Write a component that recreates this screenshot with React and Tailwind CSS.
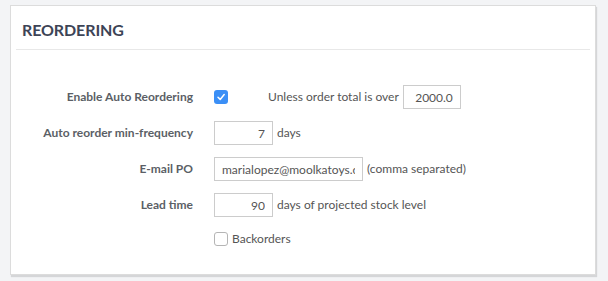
export default function App() {
  const font = { fontFamily: 'Lato, "Open Sans", sans-serif' };
  const label = "w-[177px] shrink-0 text-right text-[12px] font-bold text-[#5b5f66]";
  const input = "h-[24px] border border-[#cccccc] bg-white px-[7px] text-[12px] text-[#555] outline-none";
  return (
    <div className="w-[608px] h-[281px] bg-[#f3f4f6] pt-[5px] pl-[10px]" style={font}>
      <div className="w-[586px] h-[270px] bg-white border border-[#dcdcdc] shadow-[1px_2px_1px_rgba(0,0,0,0.12)] px-[5px]">
        <div className="border-b border-[#e8e8e8] h-[44px] px-[6px] pt-[14px]">
          <h2 className="text-[16px] font-bold text-[#3d4456] leading-[20px] tracking-[-0.1px]">REORDERING</h2>
        </div>
        <div className="flex flex-col pt-[35px] text-[12px] text-[#555]">
          <div className="flex items-center h-[24px]">
            <div className={label}>Enable Auto Reordering</div>
            <div className="ml-[21px] w-[14px] h-[14px] rounded-[3px] bg-[#3b8ff6] flex items-center justify-center">
              <svg width="10" height="10" viewBox="0 0 10 10">
                <path d="M2 5.2 L4.2 7.4 L8.2 2.6" fill="none" stroke="white" strokeWidth="1.5" strokeLinecap="round" strokeLinejoin="round" />
              </svg>
            </div>
            <span className="ml-[40px]">Unless order total is over</span>
            <input className={`${input} ml-[4px] w-[58px] text-right`} defaultValue="2000.0" />
          </div>
          <div className="flex items-center h-[24px] mt-[12px]">
            <div className={label}>Auto reorder min-frequency</div>
            <input className={`${input} ml-[21px] w-[59px] text-right`} defaultValue="7" />
            <span className="ml-[4px]">days</span>
          </div>
          <div className="flex items-center h-[24px] mt-[12px]">
            <div className={label}>E-mail PO</div>
            <input className={`${input} ml-[21px] w-[149px]`} defaultValue="marialopez@moolkatoys.com" />
            <span className="ml-[4px]">(comma separated)</span>
          </div>
          <div className="flex items-center h-[24px] mt-[12px]">
            <div className={label}>Lead time</div>
            <input className={`${input} ml-[21px] w-[59px] text-right`} defaultValue="90" />
            <span className="ml-[4px]">days of projected stock level</span>
          </div>
          <div className="flex items-center h-[24px] mt-[10px]">
            <div className="w-[177px] shrink-0" />
            <div className="ml-[21px] w-[14px] h-[14px] rounded-[3px] border border-[#b5b5b5] bg-white" />
            <span className="ml-[4px]">Backorders</span>
          </div>
        </div>
      </div>
    </div>
  );
}
